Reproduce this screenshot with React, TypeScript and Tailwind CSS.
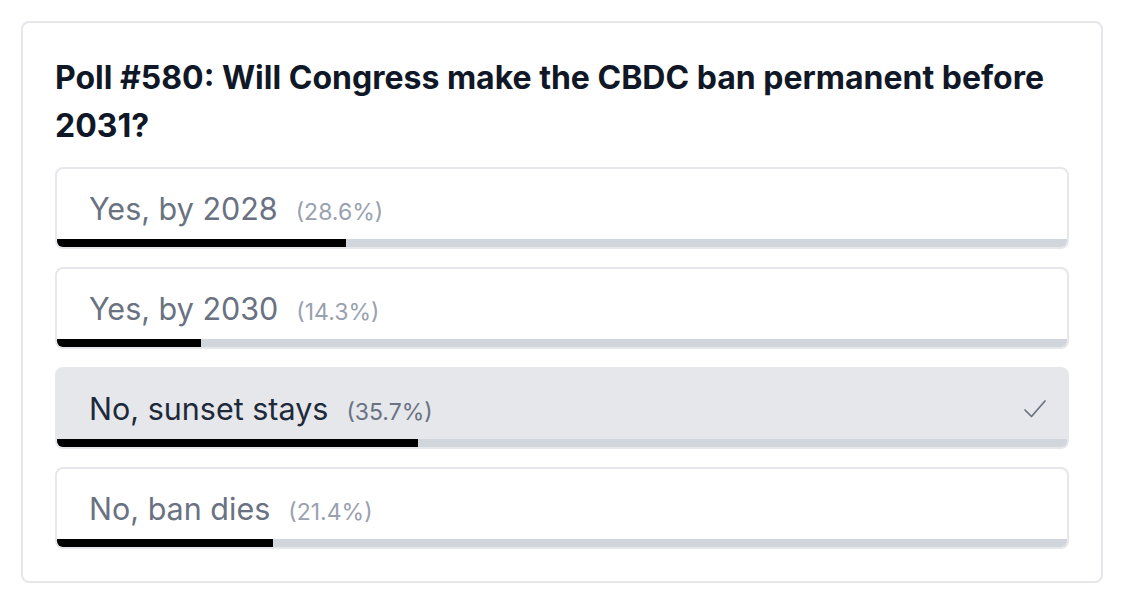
import { useState } from 'react';

interface PollOption {
    label: string;
    percent: number;
}

const OPTIONS: PollOption[] = [
    { label: 'Yes, by 2028', percent: 28.6 },
    { label: 'Yes, by 2030', percent: 14.3 },
    { label: 'No, sunset stays', percent: 35.7 },
    { label: 'No, ban dies', percent: 21.4 },
];

function CheckMark() {
    return (
        <svg width="24" height="22" viewBox="0 0 24 22" fill="none" className="text-gray-500">
            <path d="M2 12 L8.5 18.5 L22 3" stroke="currentColor" strokeWidth="1.7" strokeLinecap="round" strokeLinejoin="round" />
        </svg>
    );
}

export default function App() {
    const [selected, setSelected] = useState(2);

    return (
        <div className="min-h-screen bg-white p-[21px]" style={{ fontFamily: 'Inter, "Noto Sans", sans-serif' }}>
            <div className="w-[1082px] rounded-lg border-2 border-gray-200 bg-white px-[32px] pt-[31px] pb-[32px]">
                {/* Question */}
                <h2 className="text-[32px] leading-[48px] font-bold text-gray-900">
                    Poll #580: Will Congress make the CBDC ban permanent before 2031?
                </h2>

                {/* Options */}
                <div className="mt-[17px] flex flex-col gap-[18px]">
                    {OPTIONS.map((opt, i) => {
                        const active = i === selected;
                        return (
                            <button
                                key={opt.label}
                                onClick={() => setSelected(i)}
                                className={`w-full overflow-hidden rounded-lg border-2 border-gray-200 text-left ${active ? 'bg-gray-200' : 'bg-white'}`}
                            >
                                <div className="flex h-[70px] items-center justify-between pl-[32px] pr-[20px] pt-[10px]">
                                    <div className="flex items-baseline gap-[18px]">
                                        <span className={`text-[30.5px] leading-[36px] ${active ? 'text-gray-800' : 'text-gray-500'}`}>{opt.label}</span>
                                        <span className={`text-[23px] leading-none ${active ? 'text-gray-500' : 'text-gray-400'}`}>({opt.percent}%)</span>
                                    </div>
                                    {active && <CheckMark />}
                                </div>
                                <div className="h-2 w-full bg-gray-300">
                                    <div className="h-full bg-black" style={{ width: `${opt.percent}%` }} />
                                </div>
                            </button>
                        );
                    })}
                </div>
            </div>
        </div>
    );
}
